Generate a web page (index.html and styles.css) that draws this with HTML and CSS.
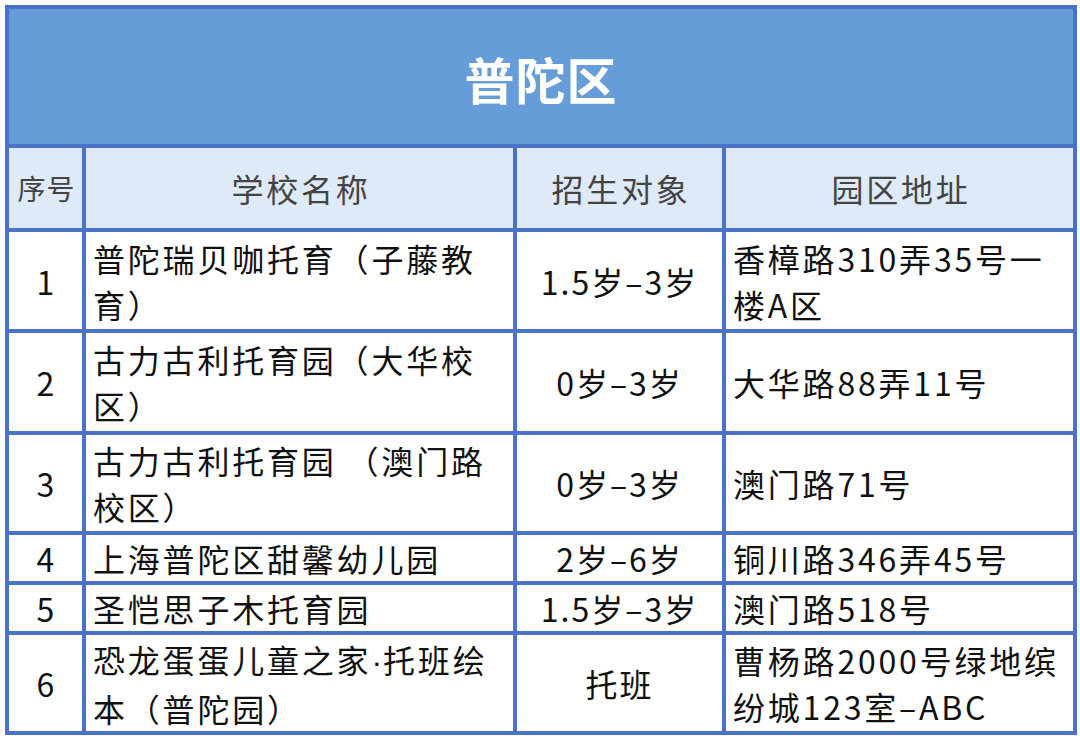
FILE: index.html
```html
<!DOCTYPE html>
<html lang="zh-CN">
<head>
<meta charset="utf-8">
<title>普陀区</title>
<link rel="stylesheet" href="styles.css">
</head>
<body>
<div class="sheet">
  <div class="cell title">普陀区</div>

  <div class="cell head num small">序号</div>
  <div class="cell head center">学校名称</div>
  <div class="cell head center">招生对象</div>
  <div class="cell head center">园区地址</div>

  <div class="cell num">1</div>
  <div class="cell left"><p>普陀瑞贝咖托育（子藤教<br>育）</p></div>
  <div class="cell center">1.5岁–3岁</div>
  <div class="cell left"><p>香樟路310弄35号一<br>楼A区</p></div>

  <div class="cell num">2</div>
  <div class="cell left"><p>古力古利托育园（大华校<br>区）</p></div>
  <div class="cell center">0岁–3岁</div>
  <div class="cell left"><p>大华路88弄11号</p></div>

  <div class="cell num">3</div>
  <div class="cell left"><p>古力古利托育园 （澳门路<br>校区）</p></div>
  <div class="cell center">0岁–3岁</div>
  <div class="cell left"><p>澳门路71号</p></div>

  <div class="cell num">4</div>
  <div class="cell left"><p>上海普陀区甜馨幼儿园</p></div>
  <div class="cell center">2岁–6岁</div>
  <div class="cell left"><p>铜川路346弄45号</p></div>

  <div class="cell num">5</div>
  <div class="cell left"><p>圣恺思子木托育园</p></div>
  <div class="cell center">1.5岁–3岁</div>
  <div class="cell left"><p>澳门路518号</p></div>

  <div class="cell num">6</div>
  <div class="cell left"><p>恐龙蛋蛋儿童之家<span class="dot">·</span>托班绘<br>本（普陀园）</p></div>
  <div class="cell center">托班</div>
  <div class="cell left"><p>曹杨路2000号绿地缤<br>纷城123室–ABC</p></div>
</div>
</body>
</html>
```

FILE: styles.css
```css
html, body {
  margin: 0;
  padding: 0;
  background: #ffffff;
}

body {
  font-family: "Noto Sans CJK SC", "Noto Sans", sans-serif;
  color: #111111;
}

.sheet {
  margin: 5px 0 0 5px;
  width: 1072px;
  box-sizing: border-box;
  padding: 4px;
  background: #4a72c9;
  display: grid;
  grid-template-columns: 73px 427px 205px 347px;
  grid-template-rows: 135px 80px 97px 98px 96px 46px 46px 96px;
  gap: 4px;
}

.cell {
  background: #ffffff;
  display: flex;
  align-items: center;
  font-size: 32px;
  line-height: 46px;
  letter-spacing: 2.8px;
  white-space: nowrap;
  overflow: hidden;
}

.cell p {
  margin: 0;
}

.title {
  grid-column: 1 / 5;
  background: #669cd8;
  color: #ffffff;
  font-size: 50px;
  font-weight: 700;
  letter-spacing: 1px;
  justify-content: center;
  padding-top: 2px;
  box-sizing: border-box;
}

.head {
  background: #deeaf7;
  color: #444444;
}

.num {
  justify-content: center;
  letter-spacing: 0;
}

.small {
  font-size: 28px;
  letter-spacing: 1px;
  padding-left: 2px;
  box-sizing: border-box;
}

.center {
  justify-content: center;
  text-align: center;
  letter-spacing: 2px;
}

.head.center {
  letter-spacing: 2.8px;
  padding-left: 3px;
  box-sizing: border-box;
}

.left {
  padding-left: 7px;
  box-sizing: border-box;
}

.dot {
  font-family: "Liberation Sans", sans-serif;
  letter-spacing: 1px;
}
```
